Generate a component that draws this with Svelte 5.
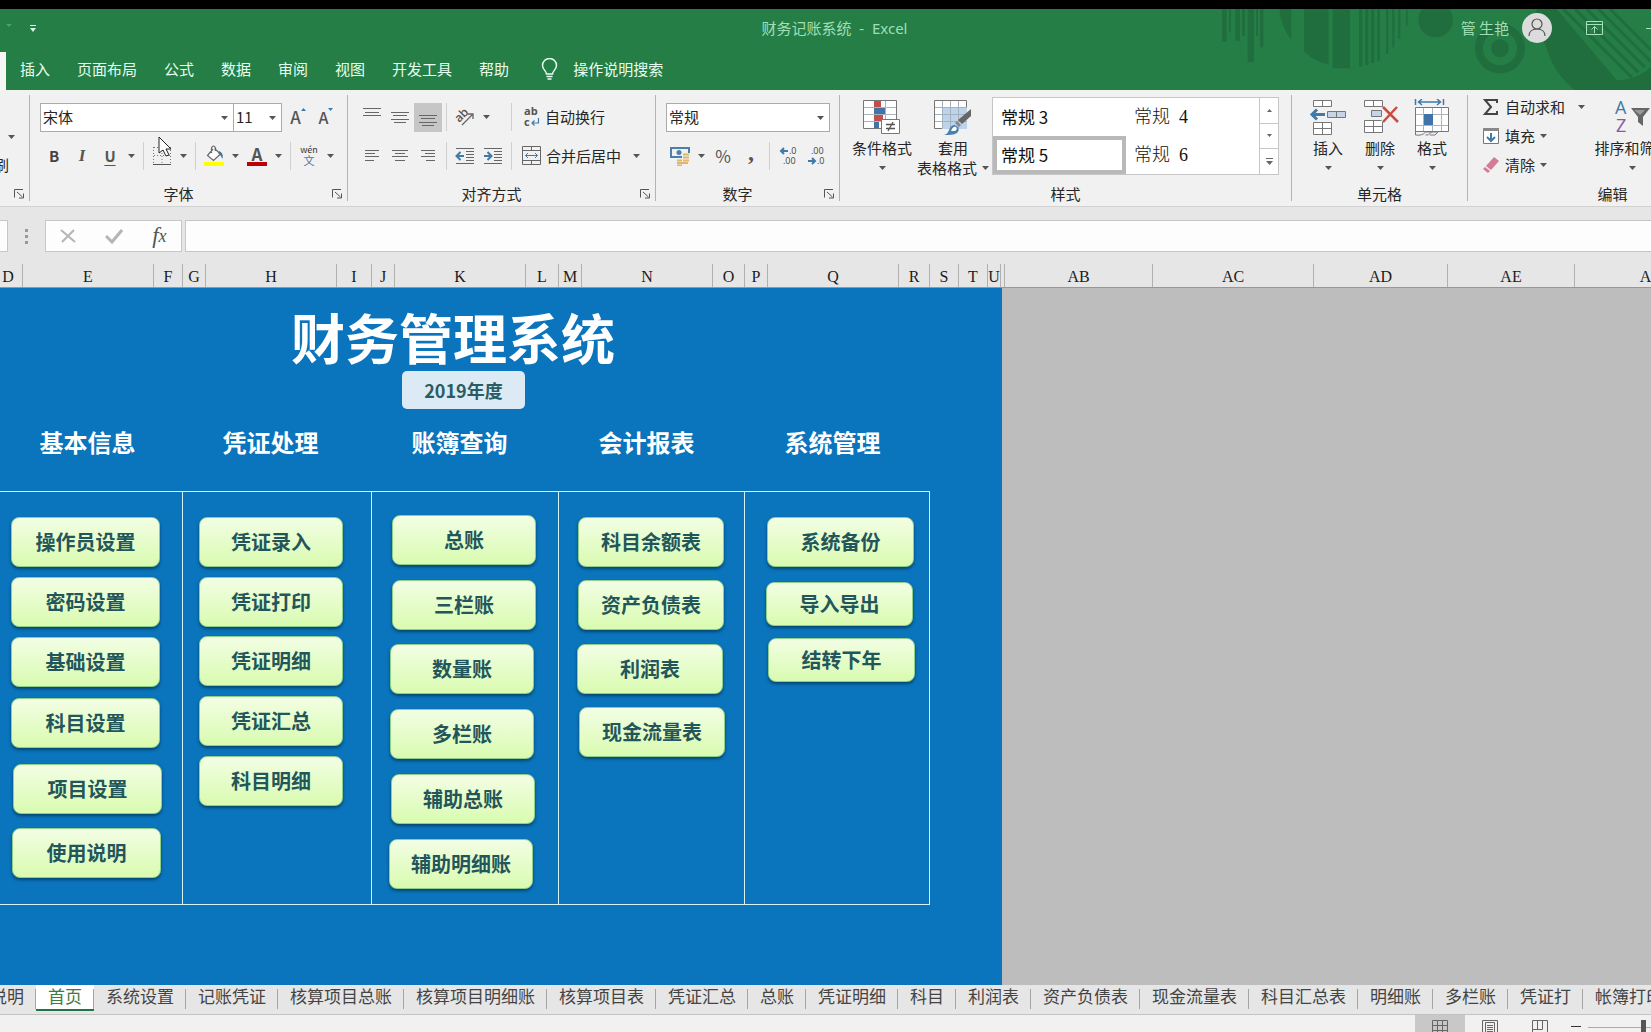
<script lang="ts">
  const menuTabs = ['插入', '页面布局', '公式', '数据', '审阅', '视图', '开发工具', '帮助'];

  const styles = [
    { name: '常规 3', active: false },
    { name: '常规  4', active: false, serif: true },
    { name: '常规 5', active: true },
    { name: '常规  6', active: false, serif: true }
  ];

  const columns = [
    { name: 'D', width: 29 },
    { name: 'E', width: 131 },
    { name: 'F', width: 29 },
    { name: 'G', width: 23 },
    { name: 'H', width: 131 },
    { name: 'I', width: 35 },
    { name: 'J', width: 23 },
    { name: 'K', width: 131 },
    { name: 'L', width: 33 },
    { name: 'M', width: 23 },
    { name: 'N', width: 131 },
    { name: 'O', width: 32 },
    { name: 'P', width: 23 },
    { name: 'Q', width: 131 },
    { name: 'R', width: 31 },
    { name: 'S', width: 29 },
    { name: 'T', width: 29 },
    { name: 'U', width: 13 },
    { name: '', width: 4 },
    { name: 'AB', width: 148 },
    { name: 'AC', width: 161 },
    { name: 'AD', width: 134 },
    { name: 'AE', width: 127 },
    { name: 'AF', width: 151 }
  ];

  const sections = ['基本信息', '凭证处理', '账簿查询', '会计报表', '系统管理'];

  // Shapes float freely over the cells: x, y from the top left of the sheet
  const shapes = [
    { text: '操作员设置', x: 11, y: 229, w: 149, h: 50 },
    { text: '密码设置', x: 11, y: 289, w: 149, h: 50 },
    { text: '基础设置', x: 11, y: 349, w: 149, h: 50 },
    { text: '科目设置', x: 11, y: 410, w: 149, h: 50 },
    { text: '项目设置', x: 13, y: 476, w: 149, h: 50 },
    { text: '使用说明', x: 12, y: 540, w: 149, h: 50 },
    { text: '凭证录入', x: 199, y: 229, w: 144, h: 50 },
    { text: '凭证打印', x: 199, y: 289, w: 144, h: 50 },
    { text: '凭证明细', x: 199, y: 348, w: 144, h: 50 },
    { text: '凭证汇总', x: 199, y: 408, w: 144, h: 50 },
    { text: '科目明细', x: 199, y: 468, w: 144, h: 50 },
    { text: '总账', x: 392, y: 227, w: 144, h: 50 },
    { text: '三栏账', x: 392, y: 292, w: 144, h: 50 },
    { text: '数量账', x: 390, y: 356, w: 144, h: 50 },
    { text: '多栏账', x: 390, y: 421, w: 144, h: 50 },
    { text: '辅助总账', x: 391, y: 486, w: 144, h: 50 },
    { text: '辅助明细账', x: 389, y: 551, w: 144, h: 50 },
    { text: '科目余额表', x: 578, y: 229, w: 146, h: 50 },
    { text: '资产负债表', x: 578, y: 292, w: 146, h: 50 },
    { text: '利润表', x: 577, y: 356, w: 146, h: 50 },
    { text: '现金流量表', x: 579, y: 419, w: 146, h: 50 },
    { text: '系统备份', x: 767, y: 229, w: 147, h: 50 },
    { text: '导入导出', x: 766, y: 294, w: 147, h: 44 },
    { text: '结转下年', x: 768, y: 350, w: 147, h: 44 }
  ];

  const sheets = [
    '首页', '系统设置', '记账凭证', '核算项目总账', '核算项目明细账', '核算项目表',
    '凭证汇总', '总账', '凭证明细', '科目', '利润表', '资产负债表', '现金流量表',
    '科目汇总表', '明细账', '多栏账', '凭证打', '帐簿打印'
  ];

  let activeSheet = $state('首页');
</script>

{#snippet caret()}
  <svg class="caret" width="7" height="4" viewBox="0 0 7 4"><path d="M0 0h7L3.5 4z" fill="currentColor" /></svg>
{/snippet}

{#snippet launcher()}
  <button class="launcher" aria-label="更多选项">
    <svg width="11" height="10" viewBox="0 0 11 10" fill="none" stroke="#555">
      <path d="M.5 8.500V.5H9" />
      <path d="M3 3l5.500 5M9.500 4.500v4.500H5" />
    </svg>
  </button>
{/snippet}

{#snippet lines(rows: number[][])}
  <svg width="20" height="20" viewBox="0 0 20 20" stroke="#666" stroke-width="1">
    {#each rows as [y, x1, x2]}
      <path d="M{x1} {y + 0.5}H{x2}" />
    {/each}
  </svg>
{/snippet}

<div class="app">
  <header>
    <svg class="pattern" width="501" height="81" viewBox="0 27 1503 243" fill="#206e3e">
      <path d="M216 27h14v98h-14zM237 27h6v70h-6zM256 27h14v95h-14zM276 27h9v80h-9zM293 27h19v160h-19zM318 27h6v80h-6zM330 27h10v115h-10z" />
      <path d="M388 27h36v92q-32-40-36-92z" />
      <path d="M462 27h74v166q-40-6-74-38zM548 27h52v178h-52z" />
      <path d="M627 27h10v172h-10zM645 27h10v168h-10zM663 27h10v162h-10zM682 27h8v155h-8zM708 27h7v135h-7zM727 27h6v115h-6zM745 27h6v90h-6zM768 27h5v50h-5z" />
      <circle cx="857" cy="60" r="52" />
      <circle cx="1050" cy="145" r="63" fill="none" stroke="#206e3e" stroke-width="24" />
      <circle cx="1050" cy="145" r="27" />
      <path d="M1160 27h60L1400 240q60 0 103-40v70h-230q-60-50-78-110-20-60-40-80z" />
      <g stroke="#206e3e" stroke-width="9">
        <path d="M1240 27l205 205M1275 27l190 190M1310 27l175 175M1345 27l158 158M1380 27l123 123" />
      </g>
    </svg>
    <div class="titlebar">
      <div class="quick">
        <svg width="30" height="10" viewBox="0 0 30 10">
          <path d="M0 1h6L3 4z" fill="#4f9f6d" />
          <path d="M24 2h6v1h-6zM24 5h6l-3 4z" fill="#d9f5e3" />
        </svg>
      </div>
      <div class="doc-title">财务记账系统&nbsp; -&nbsp; Excel</div>
      <div class="account">
        <span>管 生艳</span>
        <svg width="30" height="30" viewBox="0 0 30 30">
          <circle cx="15" cy="15" r="15" fill="#dcdcdc" />
          <g fill="none" stroke="#555" stroke-width="1.200">
            <circle cx="15" cy="11" r="5" />
            <path d="M7 23c0-4 3-7 8-7s8 3 8 7" />
          </g>
        </svg>
        <button class="window-btn" aria-label="功能区显示选项">
          <svg width="17" height="14" viewBox="0 0 17 14" fill="none" stroke="#a9e3bd">
            <path d="M.5.5h16v13H.5zM.5 3.500h16M8.500 12V5.500M5.500 8.500l3-3 3 3" />
          </svg>
        </button>
        <button class="window-btn minimize" aria-label="最小化">
          <svg width="12" height="14" viewBox="0 0 12 14" stroke="#a9e3bd"><path d="M0 7.500h12" /></svg>
        </button>
      </div>
    </div>
    <nav class="menu">
      <span class="current-tab"></span>
      {#each menuTabs as tab}
        <button>{tab}</button>
      {/each}
      <button class="tell-me">
        <svg width="17" height="22" viewBox="0 0 17 22" fill="none" stroke="#e6fff0" stroke-width="1.500">
          <path d="M5.500 16c0-3-4-4.500-4-8.500a7 7 0 0 1 14 0c0 4-4 5.500-4 8.500z" />
          <path d="M5.500 18.500h6M6.500 21h4" />
        </svg>
        操作说明搜索
      </button>
    </nav>
  </header>

  <div class="ribbon">
    <section class="group clipboard">
      <div class="body">
        <button aria-label="复制选项">{@render caret()}</button>
        <button class="brush">刷</button>
      </div>
      <div class="caption"><span></span>{@render launcher()}</div>
    </section>

    <section class="group font">
      <div class="body">
        <div class="row">
          <div class="combo font-name">
            <select aria-label="字体"><option>宋体</option></select>{@render caret()}
          </div>
          <div class="combo font-size">
            <select aria-label="字号"><option>11</option></select>{@render caret()}
          </div>
          <button class="tool grow" aria-label="增大字号">
            <span class="big-a">A</span>
            <svg width="5" height="20" viewBox="0 0 5 20"><path d="M0 4l2.500-3L5 4z" fill="#3f7aa8" /></svg>
          </button>
          <button class="tool" aria-label="减小字号">
            <span class="small-a">A</span>
            <svg width="5" height="20" viewBox="0 0 5 20"><path d="M0 1h5L2.500 4z" fill="#3f7aa8" /></svg>
          </button>
        </div>
        <div class="row">
          <button class="tool bold">B</button>
          <button class="tool italic">I</button>
          <button class="tool underline">U</button>
          <button class="drop" aria-label="下划线选项">{@render caret()}</button>
          <i class="sep"></i>
          <button class="tool" aria-label="边框">
            <svg width="18" height="20" viewBox="0 0 18 20" fill="none" stroke="#777">
              <path d="M.5 1v16M17.500 1v16M9 1v16M1 1.500h16M1 9.500h16" stroke-dasharray="1 2" />
              <path d="M0 18.500h18" stroke="#555" />
            </svg>
          </button>
          <button class="drop" aria-label="边框选项">{@render caret()}</button>
          <i class="sep"></i>
          <button class="tool" aria-label="填充颜色">
            <svg width="20" height="22" viewBox="0 0 20 22">
              <path d="M9 4L3.500 10.500l6 5 7-6.500-6-5.500M7.500 8V3q2-4 4 0v3" fill="#fff" stroke="#666" stroke-width="1.200" />
              <path d="M15 6q5 2 3.500 8-1.500-4-4-5z" fill="#4a7595" />
              <path d="M0 17h20v4H0z" fill="#ff0" />
            </svg>
          </button>
          <button class="drop" aria-label="填充颜色选项">{@render caret()}</button>
          <button class="tool font-color" aria-label="字体颜色"><b>A</b></button>
          <button class="drop" aria-label="字体颜色选项">{@render caret()}</button>
          <i class="sep"></i>
          <button class="tool pinyin" aria-label="拼音"><small>wén</small><em>文</em></button>
          <button class="drop" aria-label="拼音选项">{@render caret()}</button>
        </div>
      </div>
      <div class="caption"><span>字体</span>{@render launcher()}</div>
    </section>

    <section class="group align">
      <div class="body">
        <div class="row">
          <button class="tool" aria-label="顶端对齐">{@render lines([[1, 1, 19], [5, 3, 17], [8, 1, 19]])}</button>
          <button class="tool" aria-label="垂直居中">{@render lines([[5, 1, 19], [8, 3, 17], [12, 1, 19], [15, 4, 16]])}</button>
          <button class="tool pressed" aria-label="底端对齐">{@render lines([[8, 1, 19], [11, 3, 17], [15, 1, 19], [18, 4, 16]])}</button>
          <i class="sep"></i>
          <div class="pair">
            <button class="tool" aria-label="方向">
              <svg width="20" height="20" viewBox="0 0 20 20">
                <text x="0" y="12" transform="rotate(-45 7 9)" class="icon-text slanted">ab</text>
                <path d="M7 18L18 7M18 12V7h-5" fill="none" stroke="#666" stroke-width="1.300" />
              </svg>
            </button>
            <button class="drop" aria-label="方向选项">{@render caret()}</button>
          </div>
          <i class="sep"></i>
          <button class="labelled">
            <svg width="18" height="22" viewBox="0 0 18 22">
              <text x="2" y="9" class="icon-text">ab</text>
              <text x="2" y="20" class="icon-text">c</text>
              <path d="M16.500 12v5H10M12.500 14.500L10 17l2.500 2.500" fill="none" stroke="#3f7aa8" stroke-width="1.200" />
            </svg>
            自动换行
          </button>
        </div>
        <div class="row">
          <button class="tool" aria-label="左对齐">{@render lines([[4, 3, 17], [7, 3, 13], [10, 3, 17], [14, 3, 12]])}</button>
          <button class="tool" aria-label="居中">{@render lines([[4, 2, 18], [7, 5, 15], [10, 2, 18], [14, 5, 15]])}</button>
          <button class="tool" aria-label="右对齐">{@render lines([[4, 3, 17], [7, 7, 17], [10, 3, 17], [14, 8, 17]])}</button>
          <i class="sep"></i>
          <button class="tool" aria-label="减少缩进量">
            <svg width="20" height="20" viewBox="0 0 20 20" stroke="#666">
              <path d="M1 2.500h18M11 5.500h8M11 8.500h8M11 11.500h8M11 14.500h8M1 17.500h18" />
              <path d="M9 10H2M5.500 6L1.500 10l4 4" fill="none" stroke="#3f7aa8" stroke-width="2" />
            </svg>
          </button>
          <button class="tool" aria-label="增加缩进量">
            <svg width="20" height="20" viewBox="0 0 20 20" stroke="#666">
              <path d="M1 2.500h18M11 5.500h8M11 8.500h8M11 11.500h8M11 14.500h8M1 17.500h18" />
              <path d="M1 10h7M4.500 6l4 4-4 4" fill="none" stroke="#3f7aa8" stroke-width="2" />
            </svg>
          </button>
          <i class="sep"></i>
          <button class="labelled">
            <svg width="19" height="20" viewBox="0 0 19 20" fill="none" stroke="#666">
              <path d="M.5.5h18v18H.5zM.5 4.500h18M.5 14.500h18M9.500.5v4M9.500 14.500v4" />
              <path d="M3.500 9.500h12M6 7L3.500 9.500 6 12M13 7l2.500 2.500L13 12" stroke="#4a7595" />
            </svg>
            合并后居中
          </button>
          <button class="drop merge-drop" aria-label="合并选项">{@render caret()}</button>
        </div>
      </div>
      <div class="caption"><span>对齐方式</span>{@render launcher()}</div>
    </section>

    <section class="group number">
      <div class="body">
        <div class="row">
          <div class="combo format">
            <select aria-label="数字格式"><option>常规</option></select>{@render caret()}
          </div>
        </div>
        <div class="row">
          <button class="tool" aria-label="会计数字格式">
            <svg width="20" height="20" viewBox="0 0 20 20">
              <path d="M0 1h20v11H0z" fill="#4a7fae" />
              <path d="M2 3h16v7H2z" fill="#f1f1f1" />
              <circle cx="9" cy="6.500" r="2.500" fill="#4a7fae" />
              <path d="M12 7h8v11H12zM6 13h8v6H6z" fill="#f1f1f1" />
              <path d="M13 8.500h6M13 11.500h6M13 14.500h6M7 14.500h5M7 17h11M7 19.500h5" stroke="#e0b66c" stroke-width="2" />
            </svg>
          </button>
          <button class="drop" aria-label="会计格式选项">{@render caret()}</button>
          <button class="tool percent">%</button>
          <button class="tool comma">,</button>
          <i class="sep"></i>
          <button class="tool" aria-label="增加小数位数">
            <svg width="18" height="22" viewBox="0 0 18 22">
              <path d="M9 6H2M5 3L2 6l3 3" fill="none" stroke="#3f7aa8" stroke-width="2" />
              <text x="10" y="9" class="digit-text">.0</text>
              <text x="4" y="19" class="digit-text">.00</text>
            </svg>
          </button>
          <button class="tool" aria-label="减少小数位数">
            <svg width="18" height="22" viewBox="0 0 18 22">
              <path d="M1 16h7M5 13l3 3-3 3" fill="none" stroke="#3f7aa8" stroke-width="2" />
              <text x="4" y="9" class="digit-text">.00</text>
              <text x="10" y="19" class="digit-text">.0</text>
            </svg>
          </button>
        </div>
      </div>
      <div class="caption"><span>数字</span>{@render launcher()}</div>
    </section>

    <section class="group looks">
      <div class="body">
        <button class="large">
          <svg width="38" height="37" viewBox="0 0 38 37">
            <path d="M.5.5h33v28H.5z" fill="#fff" stroke="#777" />
            <path d="M11.500 1v27M22.500 1v27M1 7.500h32M1 14.500h32M1 21.500h32" stroke="#aab4bd" />
            <path d="M11 1h7v6h-7zM11 15h9v6h-9z" fill="#c0504a" />
            <path d="M11 8h11v6H11zM11 22h5v6h-5z" fill="#4472a8" />
            <path d="M18.500 19.500h18v14h-18z" fill="#fff" stroke="#777" />
            <path d="M23 24.500h9M23 28.500h9M30 22l-5 9" stroke="#555" stroke-width="1.300" />
          </svg>
          <span>条件格式</span>
          <span class="under">{@render caret()}</span>
        </button>
        <button class="large wide">
          <svg width="38" height="37" viewBox="0 0 38 37">
            <path d="M.5.5h32v28H.5z" fill="#fff" stroke="#777" />
            <path d="M8 8h25v21H8z" fill="#bcd3ea" />
            <path d="M8.500 1v27M16.500 1v27M24.500 1v27M1 7.500h32M1 14.500h32M1 21.500h32" stroke="#a3b2c0" />
            <path d="M37 9v7l-9 8-4-4z" fill="#666" />
            <path d="M23 21l4 4-2 2-4-4z" fill="#888" />
            <path d="M10 35c6-1 4-9 10-10 5 1 6 5 3 8-3 2-8 2-13 2z" fill="#4a7fae" />
            <path d="M17 31q2-5 5-4 2 2-1 4z" fill="#fff" />
          </svg>
          <span>套用</span>
          <span class="under">表格格式 {@render caret()}</span>
        </button>
        <div class="gallery">
          <div class="gallery-items">
            {#each styles as item}
              <button class:active={item.active} class:serif={item.serif}>{item.name}</button>
            {/each}
          </div>
          <div class="gallery-scroll">
            <button aria-label="上一行"><svg width="7" height="4" viewBox="0 0 7 4"><path d="M1 4h5L3.500 1z" fill="#666" /></svg></button>
            <button aria-label="下一行"><svg width="7" height="4" viewBox="0 0 7 4"><path d="M1 0h5L3.500 3z" fill="#666" /></svg></button>
            <button aria-label="更多样式"><svg width="7" height="7" viewBox="0 0 7 7"><path d="M0 0h7v1H0zM0 3h7L3.500 7z" fill="#666" /></svg></button>
          </div>
        </div>
      </div>
      <div class="caption"><span>样式</span></div>
    </section>

    <section class="group cells">
      <div class="body">
        <button class="large">
          <svg width="38" height="37" viewBox="0 0 38 37" fill="#fff" stroke="#777">
            <path d="M4.500 1.500h18v6h-18zM13.500 1.500v6M4.500 23.500h18v12h-18zM4.500 29.500h18M13.500 23.500v12" />
            <path d="M18.500 12.500h18v6h-18zM27.500 12.500v6" fill="#c5d5e6" />
            <path d="M16 15.500H4M8 10.500L3 15.500l5 5" fill="none" stroke="#3f7aa8" stroke-width="3" />
          </svg>
          <span>插入</span>
          <span class="under">{@render caret()}</span>
        </button>
        <button class="large">
          <svg width="38" height="37" viewBox="0 0 38 37" fill="#fff" stroke="#777">
            <path d="M3.500 1.500h18v6h-18zM12.500 1.500v6M3.500 21.500h18v12h-18zM3.500 27.500h18M12.500 21.500v12" />
            <path d="M10.500 11.500h10v6h-10z" fill="#c5d5e6" />
            <path d="M22 8l15 15M36 8L22 23" fill="none" stroke="#f1f1f1" stroke-width="5" />
            <path d="M22 8l15 15M36 8L22 23" fill="none" stroke="#cc4b3c" stroke-width="2.500" />
          </svg>
          <span>删除</span>
          <span class="under">{@render caret()}</span>
        </button>
        <button class="large">
          <svg width="38" height="37" viewBox="0 0 38 37" fill="none" stroke="#777">
            <path d="M2.500 8.500h33v24h-33z" fill="#fff" />
            <path d="M10.500 9v23M19.500 9v23M28.500 9v23M3 15.500h32M3 26.500h32" stroke="#aab4bd" />
            <path d="M11 15h9v11h-9z" fill="#3f74a8" stroke="none" />
            <path d="M2.500 32v4q7 1 10-3h6q-3 4-6 3M18 33h7l-3 3h-5" />
            <path d="M2.500 0v6M30.500 0v6M6 3h21M9 0L5.500 3 9 6M24 0l3.500 3L24 6" stroke="#3f7aa8" stroke-width="1.500" />
          </svg>
          <span>格式</span>
          <span class="under">{@render caret()}</span>
        </button>
      </div>
      <div class="caption"><span>单元格</span></div>
    </section>

    <section class="group editing">
      <div class="body">
        <div class="stack">
          <button>
            <svg width="18" height="18" viewBox="0 0 18 18"><path d="M15 5V2H3l6 7-6 7h12v-3" fill="none" stroke="#444" stroke-width="2" /></svg>
            自动求和 <span class="far">{@render caret()}</span>
          </button>
          <button>
            <svg width="18" height="18" viewBox="0 0 18 18">
              <path d="M1.500 1.500h15v15h-15z" fill="#fff" stroke="#777" /><path d="M1 1h16v3H1z" fill="#888" />
              <path d="M9 6v8M5 10l4 4 4-4" fill="none" stroke="#3f7aa8" stroke-width="2" />
            </svg>
            填充 {@render caret()}
          </button>
          <button>
            <svg width="18" height="18" viewBox="0 0 18 18">
              <path d="M12 1l5 4L9 14l-5-4z" fill="#d67a95" /><path d="M3 11l5 4-2 2-5-4z" fill="#d67a95" />
            </svg>
            清除 {@render caret()}
          </button>
        </div>
        <button class="large sort">
          <svg width="38" height="37" viewBox="0 0 38 37">
            <text x="2" y="15" class="sort-a">A</text>
            <text x="3" y="33" class="sort-z">Z</text>
            <path d="M18 9h19l-7 9v9l-5-4v-5z" fill="#666" />
            <path d="M21 11h11l-5 5z" fill="#999" />
          </svg>
          <span>排序和筛选</span>
          <span class="under">{@render caret()}</span>
        </button>
      </div>
      <div class="caption"><span>编辑</span></div>
    </section>
  </div>

  <div class="formula-bar">
    <input class="name-box" aria-label="名称框" />
    <svg class="grip" width="3" height="15" viewBox="0 0 3 15" fill="#999">
      <path d="M0 0h3v3H0zM0 6h3v3H0zM0 12h3v3H0z" />
    </svg>
    <div class="formula-buttons">
      <button aria-label="取消"><svg width="16" height="16" viewBox="0 0 16 16"><path d="M1 2l14 12M14 2L2 14" stroke="#b5b5b5" stroke-width="2" /></svg></button>
      <button aria-label="输入"><svg width="18" height="16" viewBox="0 0 18 16"><path d="M1 8l6 6L17 2" fill="none" stroke="#b5b5b5" stroke-width="3" /></svg></button>
      <button class="fx">f<sub>x</sub></button>
    </div>
    <input class="formula" aria-label="编辑栏" />
  </div>

  <div class="column-heads">
    {#each columns as col}
      <span style="width: {col.width}px">{col.name}</span>
    {/each}
  </div>

  <main>
    <div class="sheet">
      <h1>财务管理系统</h1>
      <div class="section-heads">
        {#each sections as section}
          <h2>{section}</h2>
        {/each}
      </div>
      <div class="panels">
        {#each sections as _}
          <div></div>
        {/each}
      </div>
      <span class="year">2019年度</span>
      {#each shapes as shape}
        <button
          class="shape"
          style="left: {shape.x}px; top: {shape.y}px; width: {shape.w}px; height: {shape.h}px"
        >{shape.text}</button>
      {/each}
    </div>
  </main>

  <nav class="sheet-tabs">
    <button class="cut">说明</button>
    {#each sheets as sheet}
      <button class:active={sheet === activeSheet} onclick={() => (activeSheet = sheet)}>{sheet}</button>
    {/each}
  </nav>

  <footer>
    <button class="view on" aria-label="普通">
      <svg width="16" height="16" viewBox="0 0 16 16" fill="none" stroke="#666"><path d="M.5.5h15v15H.5zM5.500.5v15M10.500.5v15M.5 5.500h15M.5 10.500h15" /></svg>
    </button>
    <button class="view" aria-label="页面布局">
      <svg width="16" height="16" viewBox="0 0 16 16" fill="none" stroke="#666"><path d="M.5.5h15v15H.5zM3.500 2.500h9v13h-9zM5 5.500h6M5 7.500h6M5 9.500h6M5 11.500h6" /></svg>
    </button>
    <button class="view" aria-label="分页预览">
      <svg width="16" height="16" viewBox="0 0 16 16" fill="none" stroke="#666"><path d="M.5.5h15v15H.5zM5.500.5v9M10.500.5v9M.5 9.500h10" /></svg>
    </button>
    <button class="zoom-out" aria-label="缩小"><svg width="10" height="16" viewBox="0 0 10 16"><path d="M0 7h10v1H0z" fill="#333" /></svg></button>
    <input class="zoom" type="range" aria-label="显示比例" min="0" max="100" value="50" />
  </footer>

  <svg class="pointer" width="14" height="21" viewBox="0 0 14 21">
    <path d="M1 1v16l4-3 3 6 3-1-3-6h5z" fill="#fff" stroke="#222" />
  </svg>
</div>

<style>
  :global(body) {
    overflow: hidden;
  }

  .app {
    position: relative;
    display: flex;
    flex-direction: column;
    height: 100vh;
    box-sizing: border-box;
    border-top: 9px solid #000;
    overflow: hidden;
    background: #e6e6e6;
    color: #262626;
    font-family: 'Noto Sans CJK SC', 'Noto Sans', sans-serif;
    font-size: 15px;
    line-height: 20px;
  }

  button {
    display: flex;
    align-items: center;
    padding: 0;
    border: 0;
    background: none;
    color: inherit;
    font: inherit;
    white-space: nowrap;
  }

  svg {
    display: block;
    flex: none;
  }

  header {
    position: relative;
    flex: none;
    background: #257e46;
    color: #e6fff0;
  }

  .pattern {
    position: absolute;
    top: 0;
    right: 0;
  }

  .titlebar {
    position: relative;
    display: grid;
    grid-template-columns: 1fr auto 1fr;
    align-items: center;
    height: 38px;
    padding-left: 18px;
    color: #a0dfb6;
  }

  .quick {
    margin-left: -12px;
  }

  .doc-title {
    font-family: 'Noto Sans', 'Noto Sans CJK SC', sans-serif;
  }

  .account {
    display: flex;
    align-items: center;
    justify-content: flex-end;
    gap: 13px;
  }

  .window-btn {
    margin-left: 21px;
  }

  .minimize {
    width: 5px;
    margin-left: 30px;
    overflow: hidden;
  }

  .menu {
    position: relative;
    display: flex;
    align-items: center;
    gap: 27px;
    height: 43px;
  }

  .menu button {
    height: 32px;
  }

  .current-tab {
    align-self: flex-end;
    width: 6px;
    height: 38px;
    margin-right: -13px;
    background: #f6f6f6;
  }

  .menu .tell-me {
    gap: 15px;
    margin-left: 5px;
  }

  .ribbon {
    display: flex;
    flex: none;
    height: 116px;
    background: #f1f1f1;
    border-bottom: 1px solid #d2d2d2;
    overflow: hidden;
  }

  .group {
    display: flex;
    flex: none;
    flex-direction: column;
    box-sizing: border-box;
    margin: 5px 0;
    padding-left: 10px;
    border-right: 1px solid #b4b4b4;
  }

  .body {
    flex: 1;
    min-height: 0;
    padding-top: 6px;
  }

  .caption {
    display: flex;
    flex: none;
    align-items: center;
    height: 14px;
    margin-left: -10px;
  }

  .caption span {
    flex: 1;
    text-align: center;
  }

  .launcher {
    width: 20px;
    height: 14px;
    justify-content: center;
  }

  .clipboard {
    width: 30px;
    padding-left: 0;
  }

  .clipboard .body {
    display: flex;
    flex-direction: column;
    gap: 16px;
    padding: 40px 0 0 8px;
  }

  .clipboard .caption {
    margin-left: 0;
  }

  .brush {
    margin-left: -14px;
  }

  .font { width: 318px; }
  .align { width: 308px; }
  .number { width: 184px; }
  .looks { width: 452px; }
  .cells { width: 176px; }
  .editing { width: 290px; }

  .row {
    display: flex;
    align-items: center;
    height: 32px;
    margin-bottom: 7px;
  }

  .caret {
    color: #555;
  }

  .combo {
    position: relative;
    box-sizing: border-box;
    height: 29px;
    border: 1px solid #ababab;
    background: #fff;
  }

  .combo select {
    width: 100%;
    height: 100%;
    padding: 0 2px;
    border: 0;
    background: none;
    appearance: none;
    color: #262626;
    font: inherit;
  }

  .combo .caret {
    position: absolute;
    top: 12px;
    right: 5px;
    pointer-events: none;
  }

  .font-name { width: 194px; }
  .font-size { width: 49px; margin-left: -1px; }
  .format { width: 164px; }

  .tool {
    justify-content: center;
    width: 28px;
    height: 29px;
    color: #555;
  }

  .grow {
    margin-left: 2px;
  }

  .big-a,
  .small-a {
    font-size: 17px;
    font-weight: 500;
  }

  .small-a {
    font-size: 16px;
  }

  .bold {
    font-weight: 700;
    color: #444;
  }

  .italic {
    font: italic 700 17px 'Liberation Serif', serif;
  }

  .underline {
    font-weight: 700;
    text-decoration: underline;
    text-underline-offset: 3px;
  }

  .drop {
    justify-content: center;
    width: 15px;
    height: 29px;
  }

  .sep {
    width: 1px;
    height: 28px;
    margin: 0 4px;
    background: #d0d0d0;
  }

  .font-color b {
    width: 20px;
    height: 15px;
    border-bottom: 4px solid #c00000;
    font-size: 17px;
    line-height: 14px;
  }

  .pinyin {
    flex-direction: column;
    justify-content: center;
  }

  .pinyin small {
    color: #333;
    font-size: 9px;
    line-height: 9px;
  }

  .pinyin em {
    color: #3f7aa8;
    font-size: 11px;
    font-style: normal;
    line-height: 13px;
  }

  .pressed {
    background: #c6c6c6;
  }

  .pair {
    display: flex;
    width: 56px;
  }

  .labelled {
    gap: 5px;
    margin-left: 6px;
  }

  .merge-drop {
    margin-left: 8px;
  }

  .icon-text {
    fill: #555;
    font: 700 11px 'Open Sans', sans-serif;
  }

  .slanted {
    font-size: 12px;
    font-weight: 600;
  }

  .digit-text {
    fill: #444;
    font: 9px 'Open Sans', sans-serif;
  }

  .percent {
    font-size: 17px;
  }

  .comma {
    padding-bottom: 8px;
    box-sizing: border-box;
    font: 700 24px 'Liberation Serif', serif;
  }

  .looks .body,
  .cells .body,
  .editing .body {
    display: flex;
    padding-top: 2px;
  }

  .large {
    flex-direction: column;
    align-items: center;
    align-self: flex-start;
    width: 52px;
    padding-top: 2px;
  }

  .large span {
    line-height: 19px;
    margin-top: 2px;
  }

  .large .under {
    display: flex;
    align-items: center;
    gap: 5px;
    height: 19px;
    margin-top: 1px;
  }

  .looks .large {
    width: 64px;
    padding-top: 3px;
  }

  .looks .wide {
    width: 78px;
  }

  .looks .large span {
    margin-top: 1px;
  }

  .gallery {
    display: flex;
    box-sizing: border-box;
    width: 287px;
    height: 78px;
    border: 1px solid #c6c6c6;
    background: #fff;
  }

  .gallery-items {
    display: grid;
    flex: 1;
    grid-template-columns: 1fr 1fr;
    grid-template-rows: 1fr 1fr;
  }

  .gallery-items button {
    padding-left: 8px;
    color: #111;
    font-size: 17px;
    white-space: pre;
  }

  .gallery-items .active {
    padding-left: 4px;
    border: 4px solid #b9b9b9;
  }

  .gallery-items .serif {
    font-family: 'Liberation Serif', 'Noto Sans CJK SC', serif;
    font-size: 18px;
    font-weight: 300;
  }

  .gallery-scroll {
    display: flex;
    flex-direction: column;
    width: 18px;
    border-left: 1px solid #c6c6c6;
  }

  .gallery-scroll button {
    flex: 1;
    justify-content: center;
  }

  .gallery-scroll button + button {
    border-top: 1px solid #c6c6c6;
  }

  .stack {
    width: 116px;
    margin-top: -5px;
  }

  .stack button {
    gap: 5px;
    height: 29px;
    margin-left: 4px;
  }

  .far {
    margin-left: 8px;
  }

  .sort {
    width: 76px;
  }

  .sort-a {
    fill: #3f7aa8;
    font: 18px 'Open Sans', sans-serif;
  }

  .sort-z {
    fill: #8a57a3;
    font: 18px 'Open Sans', sans-serif;
  }

  .formula-bar {
    display: flex;
    flex: none;
    align-items: center;
    height: 32px;
    padding: 13px 0 12px;
  }

  .formula-bar input {
    box-sizing: border-box;
    height: 32px;
    padding: 0 6px;
    border: 1px solid #c6c6c6;
    background: #fdfdfd;
    font: inherit;
  }

  .formula-bar .name-box {
    width: 28px;
    margin-left: -20px;
  }

  .grip {
    margin: 0 17px;
  }

  .formula-buttons {
    display: flex;
    align-items: center;
    justify-content: space-around;
    box-sizing: border-box;
    width: 137px;
    height: 32px;
    margin-right: 3px;
    border: 1px solid #c6c6c6;
    background: #fdfdfd;
  }

  .fx {
    color: #555;
    font: italic 23px 'Liberation Serif', serif;
  }

  .fx sub {
    font-size: 18px;
    vertical-align: baseline;
  }

  .formula-bar .formula {
    flex: 1;
    border-right: 0;
  }

  .column-heads {
    display: flex;
    flex: none;
    height: 23px;
    margin-left: -6px;
    border-bottom: 1px solid #8f9a9f;
  }

  .column-heads span {
    box-sizing: border-box;
    flex: none;
    border-right: 1px solid #b0b0b0;
    color: #1c1c1c;
    font: 16px/25px 'Liberation Serif', serif;
    text-align: center;
  }

  main {
    flex: 1;
    min-height: 0;
    overflow: hidden;
    background: #bdbdbd;
  }

  .sheet {
    position: relative;
    box-sizing: border-box;
    width: 1002px;
    height: 100%;
    padding-top: 22px;
    background: #0a74bc;
    color: #fff;
  }

  h1 {
    margin: 0;
    width: 906px;
    font-size: 54px;
    font-weight: 700;
    line-height: 54px;
    text-align: center;
  }

  .section-heads,
  .panels {
    display: grid;
    grid-template-columns: 183px 189px 187px 186px 185px;
  }

  .section-heads {
    margin: 66px 0 37px 22px;
  }

  h2 {
    width: 131px;
    margin: 0;
    font-size: 24px;
    line-height: 24px;
    text-align: center;
  }

  .panels {
    width: 930px;
    height: 412px;
    border: 1px solid #d5f5f5;
    border-width: 1px 0;
  }

  .panels div {
    border-right: 1px solid #d5f5f5;
  }

  .year {
    position: absolute;
    top: 83px;
    left: 402px;
    width: 123px;
    height: 38px;
    border-radius: 5px;
    background: #dbeaf5;
    color: #2a5d63;
    font-size: 18px;
    font-weight: 700;
    line-height: 38px;
    text-align: center;
  }

  .shape {
    position: absolute;
    justify-content: center;
    border: 1px solid #8fcf8a;
    border-radius: 8px;
    background: linear-gradient(#f2fee4, #d9fbb0);
    box-shadow: 0 2px 3px rgba(0, 40, 60, 0.6);
    color: #23565a;
    font-size: 20px;
    font-weight: 700;
  }

  .sheet-tabs {
    display: flex;
    flex: none;
    height: 29px;
    overflow: hidden;
    border-bottom: 1px solid #c3c3c3;
    color: #444;
    font-size: 17px;
  }

  .sheet-tabs button {
    position: relative;
    flex: none;
    box-sizing: border-box;
    height: 26px;
    padding: 0 12px 4px;
  }

  .sheet-tabs button::after {
    content: '';
    position: absolute;
    top: 4px;
    right: 0;
    width: 1px;
    height: 20px;
    background: #a5a5a5;
  }

  .sheet-tabs .cut {
    margin-left: -22px;
  }

  .sheet-tabs .active {
    padding-bottom: 2px;
    border-bottom: 2px solid #217346;
    background: #fff;
    color: #3f7a45;
  }

  footer {
    display: flex;
    flex: none;
    justify-content: flex-end;
    height: 17px;
    overflow: hidden;
    background: #f1f1f1;
  }

  .view {
    align-items: flex-start;
    justify-content: center;
    width: 50px;
    height: 24px;
    padding-top: 5px;
  }

  .view.on {
    background: #c8c8c8;
  }

  .zoom-out {
    height: 24px;
    margin-left: 6px;
  }

  .zoom {
    width: 110px;
    height: 24px;
    margin: 0 -47px 0 7px;
    appearance: none;
    background: linear-gradient(#aaa, #aaa) center / 100% 1px no-repeat;
  }

  .zoom::-webkit-slider-thumb {
    appearance: none;
    width: 5px;
    height: 14px;
    background: #555;
  }

  .pointer {
    position: absolute;
    top: 127px;
    left: 158px;
  }
</style>
